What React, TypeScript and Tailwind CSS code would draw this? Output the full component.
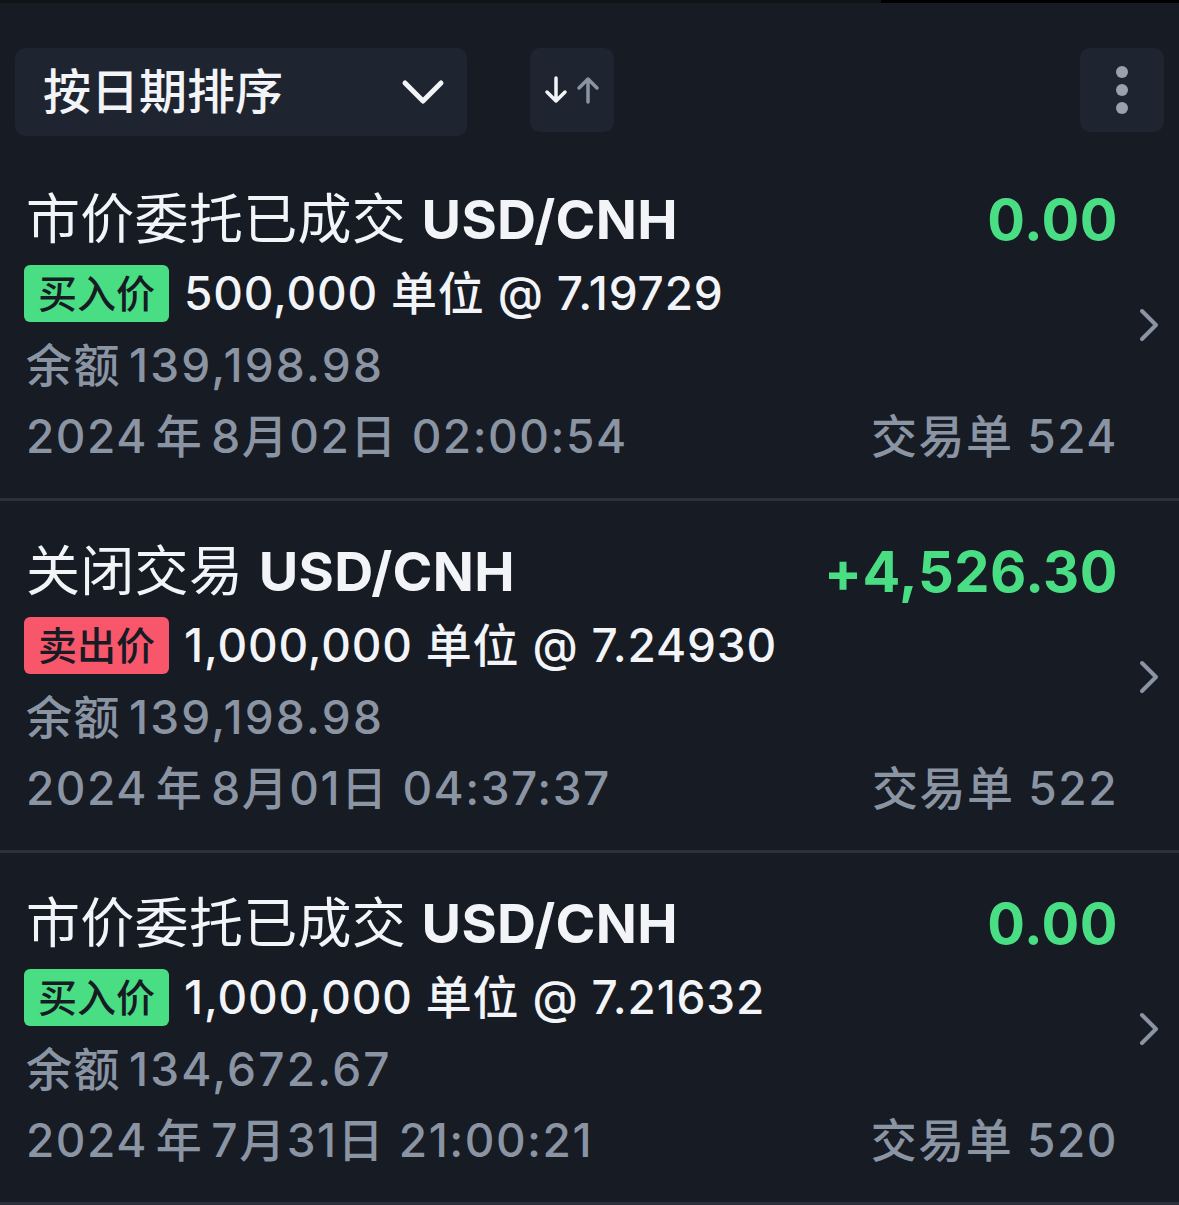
import { ReactNode } from 'react'

type Trade = {
  title: string
  amount: string
  side: 'buy' | 'sell'
  units: string
  price: string
  balance: string
  year: string
  monthDay: string
  time: string
  ticket: string
}

const trades: Trade[] = [
  {
    title: '市价委托已成交',
    amount: '0.00',
    side: 'buy',
    units: '500,000',
    price: '7.19729',
    balance: '139,198.98',
    year: '2024',
    monthDay: '8月02日',
    time: '02:00:54',
    ticket: '524',
  },
  {
    title: '关闭交易',
    amount: '+4,526.30',
    side: 'sell',
    units: '1,000,000',
    price: '7.24930',
    balance: '139,198.98',
    year: '2024',
    monthDay: '8月01日',
    time: '04:37:37',
    ticket: '522',
  },
  {
    title: '市价委托已成交',
    amount: '0.00',
    side: 'buy',
    units: '1,000,000',
    price: '7.21632',
    balance: '134,672.67',
    year: '2024',
    monthDay: '7月31日',
    time: '21:00:21',
    ticket: '520',
  },
]

const font = { fontFamily: 'Inter, "Noto Sans CJK SC", sans-serif' }

function IconButton({ children, className = '' }: { children: ReactNode; className?: string }) {
  return (
    <button className={`flex items-center justify-center rounded-[10px] bg-[#1f2530] ${className}`}>
      {children}
    </button>
  )
}

function TradeRow({ t }: { t: Trade }) {
  const buy = t.side === 'buy'
  return (
    <div className="flex items-center border-b-[3px] border-[#2b313b] pl-[26px] pr-[20px] pt-[34px] pb-[27px]">
      <div className="flex-1">
        {/* Title + amount */}
        <div className="flex h-[74px] items-center justify-between">
          <div className="text-[54px] leading-none tracking-[0.3px] text-[#f2f4f7]">
            <span>{t.title}</span>{' '}
            <span className="font-bold">USD/CNH</span>
          </div>
          <span className="text-[56px] font-bold leading-none tracking-[0.5px] text-[#4ade84]">{t.amount}</span>
        </div>

        {/* Side + units */}
        <div className="flex h-[72px] items-center">
          <span
            className={`-ml-[2px] flex h-[57px] items-center rounded-[6px] px-[14px] text-[39px] font-medium leading-none text-[#161b24] ${
              buy ? 'bg-[#4ade84]' : 'bg-[#f8566a]'
            }`}
          >
            {buy ? '买入价' : '卖出价'}
          </span>
          <span className="ml-[15px] text-[46px] font-medium leading-none tracking-[0.8px] text-[#f2f4f7]">
            {t.units} 单位 @ {t.price}
          </span>
        </div>

        {/* Balance */}
        <div className="flex h-[71px] items-center text-[46px] font-medium leading-none tracking-[1.5px] text-[#8a94a3]">
          <span>余额</span>
          <span className="ml-[8px] tracking-[2.2px]">{t.balance}</span>
        </div>

        {/* Date + ticket */}
        <div className="flex h-[71px] items-center justify-between text-[46px] font-medium leading-none tracking-[1.5px] text-[#8a94a3]">
          <span className="flex items-center whitespace-pre">
            <span>{t.year}</span>
            <span className="ml-[8px]">年</span>
            <span className="ml-[8px]">{t.monthDay}</span>
            <span> {t.time}</span>
          </span>
          <span>交易单 {t.ticket}</span>
        </div>
      </div>

      <svg width="20" height="34" viewBox="0 0 20 34" className="ml-[21px] -mt-[4px]" fill="none">
        <path d="M3 3 L17 17 L3 31" stroke="#8a94a3" strokeWidth="4" strokeLinecap="round" strokeLinejoin="round" />
      </svg>
    </div>
  )
}

export default function App() {
  return (
    <div className="min-h-[1205px] w-[1179px] bg-[#161b24]" style={font}>
      {/* status strip */}
      <div className="flex h-[3px]">
        <div className="flex-1 bg-[#101318]" />
        <div className="w-[298px] bg-black" />
      </div>

      {/* Toolbar */}
      <div className="flex h-[146px] items-start pl-[15px] pr-[15px] pt-[45px]">
        <button className="flex h-[88px] w-[452px] items-center justify-between rounded-[10px] bg-[#1f2530] pl-[28px] pr-[22px]">
          <span className="text-[48px] font-medium leading-none text-[#f2f4f7]">按日期排序</span>
          <svg width="44" height="28" viewBox="0 0 44 28" fill="none">
            <path d="M4 5 L22 23 L40 5" stroke="#f2f4f7" strokeWidth="5" strokeLinecap="round" strokeLinejoin="round" />
          </svg>
        </button>

        <IconButton className="ml-[63px] h-[84px] w-[84px]">
          <svg width="56" height="30" viewBox="0 0 56 30" fill="none">
            <path d="M12 3 V26 M3 17 L12 26 L21 17" stroke="#f2f4f7" strokeWidth="3.5" strokeLinecap="round" strokeLinejoin="round" />
            <path d="M44 27 V4 M35 13 L44 4 L53 13" stroke="#8a94a3" strokeWidth="3.5" strokeLinecap="round" strokeLinejoin="round" />
          </svg>
        </IconButton>

        <div className="flex-1" />

        <IconButton className="h-[84px] w-[84px]">
          <div className="flex flex-col gap-[6px]">
            <span className="h-[12px] w-[12px] rounded-full bg-[#9aa2ae]" />
            <span className="h-[12px] w-[12px] rounded-full bg-[#9aa2ae]" />
            <span className="h-[12px] w-[12px] rounded-full bg-[#9aa2ae]" />
          </div>
        </IconButton>
      </div>

      {trades.map((t, i) => (
        <TradeRow key={i} t={t} />
      ))}
    </div>
  )
}
